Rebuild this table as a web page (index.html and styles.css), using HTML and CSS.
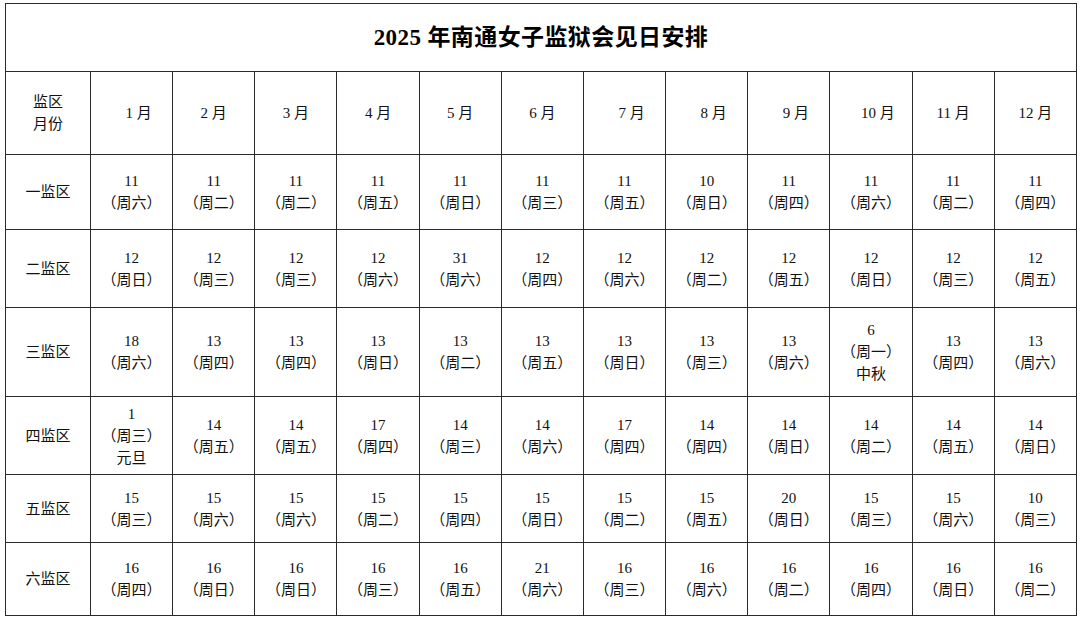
FILE: index.html
```html
<!DOCTYPE html>
<html lang="zh-CN">
<head>
<meta charset="utf-8">
<title>2025 年南通女子监狱会见日安排</title>
<link rel="stylesheet" href="styles.css">
</head>
<body>
<table class="sched">
  <colgroup>
    <col class="c-head">
    <col span="12" class="c-month">
  </colgroup>
  <tr class="r-title"><td colspan="13" class="title">2025 年南通女子监狱会见日安排</td></tr>
  <tr class="r-head">
    <td>监区<br>月份</td>
    <td class="shift">1 月</td><td>2 月</td><td>3 月</td><td>4 月</td><td>5 月</td><td>6 月</td>
    <td class="shift">7 月</td><td class="shift">8 月</td><td class="shift">9 月</td><td class="shift">10 月</td><td>11 月</td><td>12 月</td>
  </tr>
  <tr class="r1">
    <td>一监区</td>
    <td>11<br>（周六）</td><td>11<br>（周二）</td><td>11<br>（周二）</td><td>11<br>（周五）</td><td>11<br>（周日）</td><td>11<br>（周三）</td>
    <td>11<br>（周五）</td><td>10<br>（周日）</td><td>11<br>（周四）</td><td>11<br>（周六）</td><td>11<br>（周二）</td><td>11<br>（周四）</td>
  </tr>
  <tr class="r2">
    <td>二监区</td>
    <td>12<br>（周日）</td><td>12<br>（周三）</td><td>12<br>（周三）</td><td>12<br>（周六）</td><td>31<br>（周六）</td><td>12<br>（周四）</td>
    <td>12<br>（周六）</td><td>12<br>（周二）</td><td>12<br>（周五）</td><td>12<br>（周日）</td><td>12<br>（周三）</td><td>12<br>（周五）</td>
  </tr>
  <tr class="r3">
    <td>三监区</td>
    <td>18<br>（周六）</td><td>13<br>（周四）</td><td>13<br>（周四）</td><td>13<br>（周日）</td><td>13<br>（周二）</td><td>13<br>（周五）</td>
    <td>13<br>（周日）</td><td>13<br>（周三）</td><td>13<br>（周六）</td><td>6<br>（周一）<br>中秋</td><td>13<br>（周四）</td><td>13<br>（周六）</td>
  </tr>
  <tr class="r4">
    <td>四监区</td>
    <td>1<br>（周三）<br>元旦</td><td>14<br>（周五）</td><td>14<br>（周五）</td><td>17<br>（周四）</td><td>14<br>（周三）</td><td>14<br>（周六）</td>
    <td>17<br>（周四）</td><td>14<br>（周四）</td><td>14<br>（周日）</td><td>14<br>（周二）</td><td>14<br>（周五）</td><td>14<br>（周日）</td>
  </tr>
  <tr class="r5">
    <td>五监区</td>
    <td>15<br>（周三）</td><td>15<br>（周六）</td><td>15<br>（周六）</td><td>15<br>（周二）</td><td>15<br>（周四）</td><td>15<br>（周日）</td>
    <td>15<br>（周二）</td><td>15<br>（周五）</td><td>20<br>（周日）</td><td>15<br>（周三）</td><td>15<br>（周六）</td><td>10<br>（周三）</td>
  </tr>
  <tr class="r6">
    <td>六监区</td>
    <td>16<br>（周四）</td><td>16<br>（周日）</td><td>16<br>（周日）</td><td>16<br>（周三）</td><td>16<br>（周五）</td><td>21<br>（周六）</td>
    <td>16<br>（周三）</td><td>16<br>（周六）</td><td>16<br>（周二）</td><td>16<br>（周四）</td><td>16<br>（周日）</td><td>16<br>（周二）</td>
  </tr>
</table>
</body>
</html>
```

FILE: styles.css
```css
html, body {
  margin: 0;
  padding: 0;
  background: #ffffff;
}

body {
  padding: 3px 0 0 5px;
  font-family: "Liberation Serif", "Noto Sans CJK SC", serif;
  color: #111;
}

.sched {
  width: 1072px;
  height: 612px;
  table-layout: fixed;
  border-collapse: collapse;
  font-size: 15px;
  line-height: 22px;
}

.c-head { width: 85px; }

.sched td {
  border: 1px solid #2a2a2a;
  text-align: center;
  vertical-align: middle;
  padding: 0;
  font-feature-settings: "halt";
}

.sched .title {
  font-size: 23px;
  font-weight: bold;
  color: #000;
  letter-spacing: 0.4px;
}

.r-title { height: 68px; }
.r-head { height: 83px; }
.r1 { height: 75px; }
.r2 { height: 78px; }
.r3 { height: 89px; }
.r4 { height: 78px; }
.r5 { height: 68px; }
.r6 { height: 73px; }

.sched td.shift { padding-left: 14px; }
```
